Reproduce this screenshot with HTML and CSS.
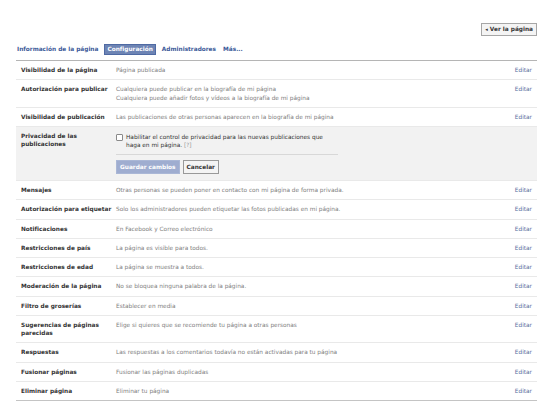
FILE: index.html
```html
<!DOCTYPE html>
<html lang="es">
<head>
<meta charset="utf-8">
<link rel="stylesheet" href="styles.css">
</head>
<body>
<div class="page">
  <div class="top">
    <span class="view-btn"><span class="arrow">◂</span> Ver la página</span>
  </div>
  <div class="tabs">
    <span class="tab">Información de la página</span>
    <span class="tab active">Configuración</span>
    <span class="tab">Administradores</span>
    <span class="tab">Más...</span>
  </div>
  <div class="list">
    <div class="row"><div class="label">Visibilidad de la página</div><div class="value">Página publicada</div><div class="edit">Editar</div></div>
    <div class="row"><div class="label">Autorización para publicar</div><div class="value">Cualquiera puede publicar en la biografía de mi página<br>Cualquiera puede añadir fotos y vídeos a la biografía de mi página</div><div class="edit">Editar</div></div>
    <div class="row"><div class="label">Visibilidad de publicación</div><div class="value">Las publicaciones de otras personas aparecen en la biografía de mi página</div><div class="edit">Editar</div></div>
    <div class="row open">
      <div class="label">Privacidad de las publicaciones</div>
      <div class="panel">
        <div class="check-line"><span class="box"></span><span class="check-text">Habilitar el control de privacidad para las nuevas publicaciones que<br>haga en mi página. <span class="help">[?]</span></span></div>
        <div class="btns"><span class="btn save">Guardar cambios</span><span class="btn cancel">Cancelar</span></div>
      </div>
    </div>
    <div class="row"><div class="label">Mensajes</div><div class="value">Otras personas se pueden poner en contacto con mi página de forma privada.</div><div class="edit">Editar</div></div>
    <div class="row"><div class="label">Autorización para etiquetar</div><div class="value">Solo los administradores pueden etiquetar las fotos publicadas en mi página.</div><div class="edit">Editar</div></div>
    <div class="row"><div class="label">Notificaciones</div><div class="value">En Facebook y Correo electrónico</div><div class="edit">Editar</div></div>
    <div class="row"><div class="label">Restricciones de país</div><div class="value">La página es visible para todos.</div><div class="edit">Editar</div></div>
    <div class="row"><div class="label">Restricciones de edad</div><div class="value">La página se muestra a todos.</div><div class="edit">Editar</div></div>
    <div class="row"><div class="label">Moderación de la página</div><div class="value">No se bloquea ninguna palabra de la página.</div><div class="edit">Editar</div></div>
    <div class="row"><div class="label">Filtro de groserías</div><div class="value">Establecer en media</div><div class="edit">Editar</div></div>
    <div class="row"><div class="label">Sugerencias de páginas parecidas</div><div class="value">Elige si quieres que se recomiende tu página a otras personas</div><div class="edit">Editar</div></div>
    <div class="row"><div class="label">Respuestas</div><div class="value">Las respuestas a los comentarios todavía no están activadas para tu página</div><div class="edit">Editar</div></div>
    <div class="row"><div class="label">Fusionar páginas</div><div class="value">Fusionar las páginas duplicadas</div><div class="edit">Editar</div></div>
    <div class="row last"><div class="label">Eliminar página</div><div class="value">Eliminar tu página</div><div class="edit">Editar</div></div>
  </div>
</div>
</body>
</html>
```

FILE: styles.css
```css
html, body {
  margin: 0;
  padding: 0;
  background: #fff;
}
body {
  font-family: "DejaVu Sans", Verdana, sans-serif;
  font-size: 5.8px;
  color: #333;
}
.page {
  width: 521px;
  margin-left: 16px;
}
.top {
  display: flex;
  justify-content: flex-end;
  padding-top: 23px;
}
.view-btn {
  display: inline-block;
  height: 11px;
  line-height: 11px;
  padding: 0 3px;
  border: 1px solid #a6a6a6;
  background: #f4f4f4;
  font-weight: bold;
  color: #333;
  font-size: 5.8px;
}
.arrow {
  font-size: 5px;
}
.tabs {
  display: flex;
  align-items: center;
  gap: 5px;
  margin-top: 8px;
  padding-bottom: 5px;
  border-bottom: 1px solid #b5b5b5;
}
.tab {
  color: #3b5998;
  font-weight: bold;
  line-height: 9px;
  padding: 0 1px;
}
.tab.active {
  background: #6d84b4;
  color: #fff;
  border: 1px solid #4f6aa3;
  padding: 0 2px;
}
.row {
  display: flex;
  padding: 5px 5px;
  line-height: 8.25px;
  border-bottom: 1px solid #e9e9e9;
}
.row.last {
  border-bottom: 1px solid #c4c4c4;
}
.label {
  width: 95px;
  flex: none;
  font-weight: bold;
  color: #333;
}
.value {
  flex: 1;
  color: #808080;
}
.edit {
  flex: none;
  color: #5a6fa0;
}
.row.open {
  background: #f2f2f2;
  padding-top: 5px;
  padding-bottom: 6px;
}
.panel {
  width: 222px;
}
.check-line {
  display: flex;
  gap: 3px;
  padding-top: 1px;
  padding-bottom: 5px;
  border-bottom: 1px solid #d8d8d8;
  line-height: 8px;
}
.box {
  flex: none;
  width: 5px;
  height: 5px;
  margin-top: 1px;
  border: 1px solid #8a8a8a;
  border-radius: 1px;
  background: #fff;
}
.check-text {
  color: #333;
}
.help {
  color: #999;
}
.btns {
  display: flex;
  gap: 3px;
  margin-top: 5px;
}
.btn {
  display: inline-block;
  height: 12px;
  line-height: 12px;
  padding: 0 3px;
  font-weight: bold;
}
.btn.save {
  background: #9fadd0;
  border: 1px solid #aab7d6;
  color: #fff;
}
.btn.cancel {
  background: #f4f4f4;
  border: 1px solid #999;
  color: #333;
}
```
